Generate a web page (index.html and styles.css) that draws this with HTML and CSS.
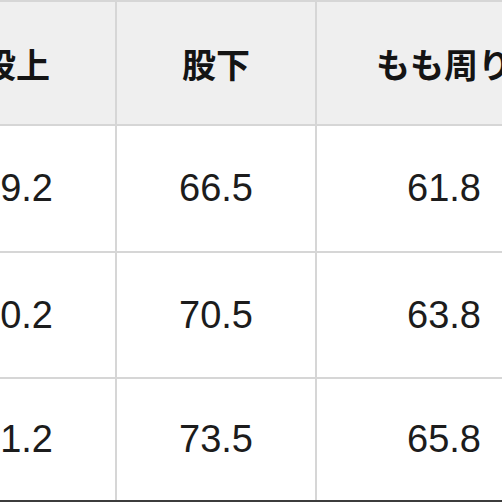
FILE: index.html
```html
<!DOCTYPE html>
<html lang="ja">
<head>
<meta charset="utf-8">
<link rel="stylesheet" href="styles.css">
</head>
<body>
<div class="sheet">
  <div class="cell head">股上</div>
  <div class="cell head">股下</div>
  <div class="cell head">もも周り</div>
  <div class="cell head">裾幅</div>
  <div class="cell">69.2</div>
  <div class="cell">66.5</div>
  <div class="cell">61.8</div>
  <div class="cell">21.0</div>
  <div class="cell">70.2</div>
  <div class="cell">70.5</div>
  <div class="cell">63.8</div>
  <div class="cell">22.0</div>
  <div class="cell">31.2</div>
  <div class="cell">73.5</div>
  <div class="cell">65.8</div>
  <div class="cell">23.0</div>
</div>
</body>
</html>
```
FILE: styles.css
```css
html, body {
  margin: 0;
  padding: 0;
  background: #ffffff;
  overflow: hidden;
  width: 502px;
  height: 502px;
}
.sheet {
  display: grid;
  grid-template-columns: 198px 198px 254px 200px;
  grid-template-rows: 122px 125px 124px 121px;
  gap: 2px;
  padding: 2px 2px 0 2px;
  margin-left: -85px;
  width: max-content;
  background: #d6d6d6;
  border-bottom: 2px solid #3c3c3c;
}
.cell {
  display: flex;
  align-items: center;
  justify-content: center;
  background: #ffffff;
  color: #1c1c1c;
  font-family: "Liberation Sans", Arial, "Noto Sans CJK JP", sans-serif;
  font-size: 38px;
  white-space: nowrap;
}
.head {
  background: #efefef;
  color: #141414;
  font-family: "Noto Sans CJK JP", sans-serif;
  font-weight: 700;
  font-size: 34px;
}
```
